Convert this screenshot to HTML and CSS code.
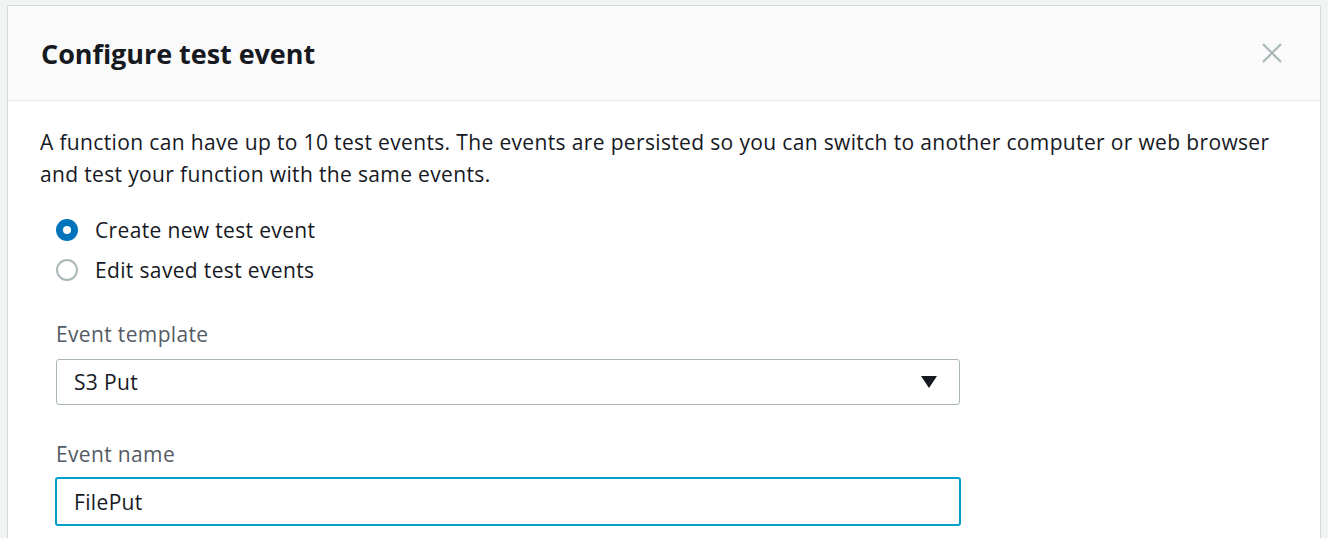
FILE: index.html
```html
<!DOCTYPE html>
<html>
<head>
<meta charset="utf-8">
<link rel="stylesheet" href="styles.css">
</head>
<body>
<div class="page">
  <div class="modal">
    <div class="modal-header">
      <h2 class="title">Configure test event</h2>
      <button class="close" aria-label="Close">
        <svg width="22" height="22" viewBox="0 0 22 22"><path d="M2 2L20 20M20 2L2 20" stroke="#aab7b8" stroke-width="2.2" fill="none"/></svg>
      </button>
    </div>
    <div class="modal-body">
      <p class="intro">A function can have up to 10 test events. The events are persisted so you can switch to another computer or web browser and test your function with the same events.</p>
      <div class="form">
        <div class="radios">
          <label class="radio-row"><span class="radio checked"></span><span>Create new test event</span></label>
          <label class="radio-row"><span class="radio"></span><span>Edit saved test events</span></label>
        </div>
        <div class="field">
          <div class="label">Event template</div>
          <div class="select"><span>S3 Put</span><span class="caret"></span></div>
        </div>
        <div class="field">
          <div class="label">Event name</div>
          <div class="input">FilePut</div>
        </div>
      </div>
    </div>
  </div>
</div>
</body>
</html>
```
FILE: styles.css
```css
* { box-sizing: border-box; }
html, body { margin: 0; padding: 0; }
body {
  background: #f2f3f3;
  font-family: "Open Sans", "Noto Sans", "Liberation Sans", sans-serif;
  color: #16191f;
  height: 538px;
  overflow: hidden;
}
.page {
  padding: 5px 7px 0 7px;
}
.modal {
  background: #ffffff;
  border: 1px solid #d5dbdb;
  border-bottom: none;
  height: 533px;
  overflow: hidden;
}
.modal-header {
  height: 95px;
  background: #fafafa;
  border-bottom: 1px solid #e6e9e9;
  display: flex;
  align-items: center;
  justify-content: space-between;
  padding: 0 37px 0 33px;
}
.title {
  margin: 0;
  font-size: 27px;
  font-weight: 700;
  color: #16191f;
  letter-spacing: -0.05px;
}
.close {
  background: none;
  border: none;
  padding: 0;
  width: 22px;
  height: 22px;
  display: flex;
  cursor: pointer;
}
.modal-body {
  padding: 25px 32px 0 32px;
}
.intro {
  margin: 0;
  font-size: 21px;
  line-height: 32px;
  letter-spacing: 0.35px;
  color: #16191f;
}
.form {
  padding-left: 16px;
}
.radios {
  margin-top: 20px;
  display: flex;
  flex-direction: column;
}
.radio-row {
  display: flex;
  align-items: center;
  height: 40px;
  font-size: 21px;
  letter-spacing: 0.35px;
  color: #16191f;
  gap: 17px;
}
.radio {
  width: 22px;
  height: 22px;
  border-radius: 50%;
  border: 2px solid #aab7b8;
  background: #fff;
  flex: none;
}
.radio.checked {
  border: 7px solid #0073bb;
}
.field {
  width: 904px;
}
.label {
  font-size: 21px;
  letter-spacing: 0.35px;
  line-height: 32px;
  color: #545b64;
  margin-top: 28px;
}
.field + .field .label { margin-top: 33px; }
.select {
  margin-top: 9px;
  height: 46px;
  border: 1px solid #aab7b8;
  border-radius: 3px;
  display: flex;
  align-items: center;
  justify-content: space-between;
  padding: 0 22px 0 17px;
  font-size: 21px;
  letter-spacing: 0.35px;
  color: #16191f;
}
.caret {
  width: 0;
  height: 0;
  border-left: 8px solid transparent;
  border-right: 8px solid transparent;
  border-top: 12px solid #16191f;
}
.input {
  margin-top: 7px;
  margin-left: -1px;
  width: 906px;
  height: 49px;
  border: 2px solid #00a1c9;
  border-radius: 3px;
  display: flex;
  align-items: center;
  padding-left: 17px;
  font-size: 21px;
  letter-spacing: 0.35px;
  color: #16191f;
}
```
